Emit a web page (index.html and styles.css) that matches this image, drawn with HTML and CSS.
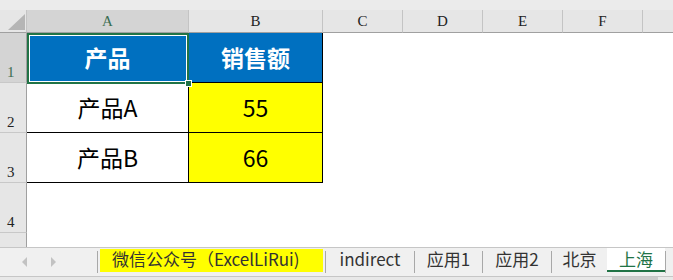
FILE: index.html
```html
<!DOCTYPE html>
<html lang="zh-CN">
<head>
<meta charset="utf-8">
<title>Sheet</title>
<link rel="stylesheet" href="styles.css">
</head>
<body>
<div class="app">
  <div class="topband"></div>
  <div class="sheet">
    <div class="corner"><span class="tri"></span></div>
    <div class="colhead sel">A</div>
    <div class="colhead">B</div>
    <div class="colhead">C</div>
    <div class="colhead">D</div>
    <div class="colhead">E</div>
    <div class="colhead">F</div>
    <div class="colhead last"></div>

    <div class="rowhead sel">1</div>
    <div class="cell hdr a1">产品
      <span class="selection"><span class="handle"></span></span>
    </div>
    <div class="cell hdr">销售额</div>
    <div class="blank"></div><div class="blank"></div><div class="blank"></div><div class="blank"></div><div class="blank"></div>

    <div class="rowhead">2</div>
    <div class="cell">产品A</div>
    <div class="cell yel">55</div>
    <div class="blank"></div><div class="blank"></div><div class="blank"></div><div class="blank"></div><div class="blank"></div>

    <div class="rowhead">3</div>
    <div class="cell">产品B</div>
    <div class="cell yel">66</div>
    <div class="blank"></div><div class="blank"></div><div class="blank"></div><div class="blank"></div><div class="blank"></div>

    <div class="rowhead">4</div>
    <div class="blank"></div><div class="blank"></div><div class="blank"></div><div class="blank"></div><div class="blank"></div><div class="blank"></div><div class="blank"></div>

    <div class="rowhead short"></div>
    <div class="blank"></div><div class="blank"></div><div class="blank"></div><div class="blank"></div><div class="blank"></div><div class="blank"></div><div class="blank"></div>
  </div>
  <div class="tabbar">
    <div class="nav">
      <span class="arrow left"></span>
      <span class="arrow right"></span>
    </div>
    <span class="sep"></span>
    <div class="tab tab-wx">微信公众号（ExcelLiRui)</div>
    <span class="sep"></span>
    <div class="tab tab-ind">indirect</div>
    <span class="sep"></span>
    <div class="tab tab-y1">应用1</div>
    <span class="sep"></span>
    <div class="tab tab-y2">应用2</div>
    <span class="sep"></span>
    <div class="tab tab-bj">北京</div>
    <div class="tab tab-sh active">上海</div>
    <span class="sep"></span>
  </div>
  <div class="footer"><span class="thumb"></span></div>
</div>
</body>
</html>
```

FILE: styles.css
```css
* { box-sizing: border-box; }
html, body { margin: 0; padding: 0; }
body {
  width: 673px;
  height: 280px;
  overflow: hidden;
  background: #ffffff;
  font-family: "Noto Sans CJK SC", "Noto Sans", sans-serif;
}
.app { width: 673px; height: 280px; display: flex; flex-direction: column; }
.topband { height: 10px; background: #ebebeb; flex: none; }

.sheet {
  display: grid;
  grid-template-columns: 27px 162px 134px 80px 80px 80px 80px 30px;
  grid-template-rows: 23px 50px 50px 50px 50px 14px;
  flex: none;
}
.corner {
  background: #e6e6e6;
  border-right: 1px solid #c4c4c4;
  border-bottom: 1px solid #a0a0a0;
  position: relative;
}
.tri {
  position: absolute;
  left: 8px;
  top: 4px;
  width: 17px;
  height: 16px;
  background: #b5b5b5;
  clip-path: polygon(100% 0, 100% 100%, 0 100%);
}
.colhead {
  background: #e6e6e6;
  border-right: 1px solid #c4c4c4;
  border-bottom: 1px solid #a0a0a0;
  font-family: "Liberation Serif", "DejaVu Serif", serif;
  font-size: 15px;
  color: #222;
  display: flex;
  align-items: center;
  justify-content: center;
  padding-top: 1px;
}
.colhead.sel { background: #d4d4d4; color: #3c6e52; border-right-color: #c4c4c4; }
.colhead.last { border-right: none; }

.rowhead {
  background: #e6e6e6;
  border-right: 1px solid #a0a0a0;
  border-bottom: 1px solid #c8c8c8;
  font-family: "Liberation Serif", "DejaVu Serif", serif;
  font-size: 15px;
  color: #222;
  display: flex;
  align-items: flex-end;
  padding-left: 7px;
  padding-bottom: 2px;
  line-height: 15px;
}
.rowhead.sel { background: #d4d4d4; color: #3c6e52; }
.rowhead.short { border-bottom: none; }

.cell {
  border-right: 1px solid #000;
  border-bottom: 1px solid #000;
  display: flex;
  align-items: center;
  justify-content: center;
  font-size: 23px;
  color: #000;
  line-height: 1;
  padding-bottom: 1px;
}
.cell.hdr { background: #0070c0; color: #fff; font-weight: 700; }
.cell.yel { background: #ffff00; }
.a1 { position: relative; }
.selection {
  position: absolute;
  left: 0;
  top: 0;
  width: 162px;
  height: 51px;
  border: 2px solid #217346;
  box-shadow: inset 0 0 0 1px #ffffff;
}
.handle {
  position: absolute;
  right: -5px;
  bottom: -5px;
  width: 7px;
  height: 7px;
  background: #217346;
  border: 1px solid #ffffff;
}
.blank { background: #fff; }

.tabbar {
  flex: none;
  height: 30px;
  background: #f0f0f0;
  border-top: 1px solid #c6c6c6;
  border-bottom: 1px solid #c6c6c6;
  display: flex;
  align-items: flex-start;
}
.nav {
  width: 97px;
  height: 28px;
  display: flex;
  align-items: center;
  padding-left: 22px;
  gap: 24px;
  flex: none;
}
.arrow {
  width: 0;
  height: 0;
  border-top: 5px solid transparent;
  border-bottom: 5px solid transparent;
}
.arrow.left { border-right: 5px solid #c2c2c2; }
.arrow.right { border-left: 5px solid #c2c2c2; }
.sep {
  flex: none;
  width: 1px;
  height: 22px;
  margin-top: 3px;
  background: #a8a8a8;
}
.tab {
  flex: none;
  height: 23px;
  margin-top: 1px;
  font-size: 17px;
  line-height: 20px;
  color: #333;
  display: flex;
  justify-content: center;
  align-items: flex-start;
}
.tab-wx { width: 223px; margin-left: 2px; margin-right: 2px; background: #ffff00; justify-content: flex-start; padding-left: 12px; }
.tab-ind { width: 88px; }
.tab-y1 { width: 67px; }
.tab-y2 { width: 68px; }
.tab-bj { width: 55px; }
.tab-sh { width: 58px; }
.tab.active {
  background: #ffffff;
  color: #217346;
  height: 24px;
  margin-top: 0;
  padding-top: 1px;
  border-bottom: 2px solid #217346;
}
.footer {
  flex: 1;
  background: #e8e8e8;
  position: relative;
}
.thumb {
  position: absolute;
  left: 612px;
  top: 0;
  width: 46px;
  height: 4px;
  background: #cbcbcb;
}
```
